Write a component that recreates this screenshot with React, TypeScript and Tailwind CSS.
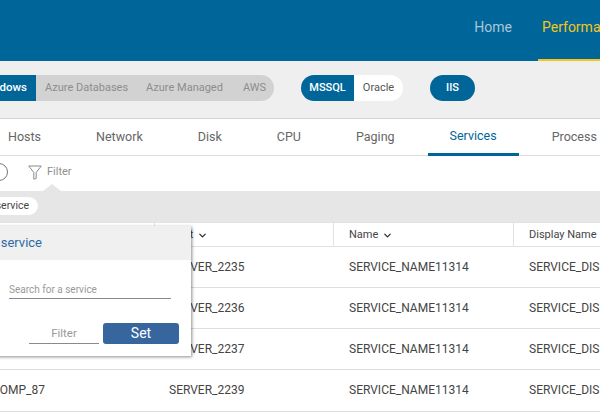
import React from 'react'
import { ChevronDown } from 'lucide-react'

const tabs = ['Hosts', 'Network', 'Disk', 'CPU', 'Paging', 'Services', 'Process']
const rows = ['SERVER_2235', 'SERVER_2236', 'SERVER_2237', 'SERVER_2239']

function Columns({ cells, className }: { cells: React.ReactNode[]; className: string }) {
  return (
    <div className={`-ml-[60px] grid w-[720px] grid-cols-[214px_179px_180px_1fr] ${className}`}>
      {cells.map((cell, i) => (
        <div key={i} className="flex items-center whitespace-nowrap">
          {cell}
        </div>
      ))}
    </div>
  )
}

function HeaderCell({ label, sort, first }: { label: string; sort?: boolean; first?: boolean }) {
  return (
    <div className={`flex h-full w-full items-center gap-[4px] pl-[15px] pt-[1px] ${first ? '' : 'border-l border-[#e2e2e2]'}`}>
      <span>{label}</span>
      {sort && <ChevronDown size={11} strokeWidth={2.5} className="text-[#222]" />}
    </div>
  )
}

export default function App() {
  return (
    <div className="relative h-[413px] w-[600px] overflow-hidden bg-white font-['Roboto',sans-serif]">
      {/* Top nav */}
      <div className="flex h-[61px] justify-end bg-[#006699] text-[14px]">
        <div className="flex items-center">
          <span className="mr-[26px] pb-[6px] text-[#a9c6d8]">Home</span>
          <div className="flex h-full w-[62px] items-center overflow-hidden border-b-2 border-[#f5c518] pb-[4px] pl-[4px]">
            <span className="whitespace-nowrap text-[#f5c518]">Performance</span>
          </div>
        </div>
      </div>

      {/* Platform switches */}
      <div className="flex h-[58px] items-center whitespace-nowrap border-b border-[#d2d2d2] bg-[#efefef] pb-[3px] text-[11px]">
        <div className="-ml-[40px] flex h-[26px] w-[314px] items-center overflow-hidden rounded-r-[13px] bg-[#d2d2d2] text-[#8d8d8d]">
          <div className="flex h-full w-[76px] shrink-0 items-center justify-end bg-[#006699] pr-[9px] text-[11.5px] font-medium text-white">
            Windows
          </div>
          <span className="ml-[9px]">Azure Databases</span>
          <span className="ml-[18px]">Azure Managed</span>
          <span className="ml-[20px]">AWS</span>
        </div>
        <div className="ml-[27px] flex h-[26px] w-[102px] overflow-hidden rounded-[13px] bg-white">
          <div className="flex w-[53px] items-center justify-center bg-[#006699] font-medium text-white">MSSQL</div>
          <div className="flex flex-1 items-center justify-center text-[#555]">Oracle</div>
        </div>
        <div className="ml-[27px] flex h-[26px] w-[45px] items-center justify-center rounded-[13px] bg-[#006699] font-medium text-white">
          IIS
        </div>
      </div>

      {/* Tabs */}
      <div className="flex h-[37px] items-stretch gap-[11px] whitespace-nowrap border-b border-[#dfdfdf] text-[12.5px] text-[#666]">
        {tabs.map((tab, i) => (
          <div
            key={tab}
            className={`flex items-center px-[22px] ${i === 0 ? '-ml-[14px]' : ''} ${
              tab === 'Services' ? '-mb-px border-b-[3px] border-[#006699] pt-[1px] text-[#006699]' : ''
            }`}
          >
            {tab}
          </div>
        ))}
      </div>

      {/* Filter row */}
      <div className="flex h-[35px] items-center pb-[3px] text-[11px] text-[#8f8f8f]">
        <div className="-ml-[10px] h-[18px] w-[18px] rounded-full border border-[#777]" />
        <svg width="14" height="15" viewBox="0 0 14 15" fill="none" className="ml-[20px]">
          <path d="M0.7 1h12.6L8.2 7.4v6L5.8 14.2V7.4z" stroke="#8a8a8a" strokeWidth="1" strokeLinejoin="round" />
        </svg>
        <span className="ml-[5px]">Filter</span>
      </div>

      {/* Applied filters band */}
      <div className="relative flex h-[31px] items-center bg-[#e6e6e6]">
        <div className="absolute -top-[7px] left-[43px] h-0 w-0 border-x-[9px] border-b-[7px] border-x-transparent border-b-[#e6e6e6]" />
        <div className="-ml-[40px] mb-[2px] flex h-[18px] w-[78px] items-center justify-end rounded-[9px] bg-white pr-[9px] text-[10.5px] text-[#444]">
          service
        </div>
      </div>

      {/* Table */}
      <Columns
        className="h-[25px] border-b border-t border-[#e2e2e2] text-[11px] text-[#444]"
        cells={[
          <HeaderCell label="Component" first />,
          <HeaderCell label="Host" sort />,
          <HeaderCell label="Name" sort />,
          <HeaderCell label="Display Name" />,
        ]}
      />
      {rows.map((server, i) => (
        <Columns
          key={server}
          className={`border-b border-[#dedede] text-[12px] text-[#444] ${i === 3 ? 'h-[42px] pb-[1px]' : 'h-[41px]'}`}
          cells={[
            <span className="pl-[52px]">COMP_87</span>,
            <span className="pl-[15px]">{server}</span>,
            <span className="pl-[16px]">SERVICE_NAME11314</span>,
            <span className="pl-[16px]">SERVICE_DISPLAY_NAME</span>,
          ]}
        />
      ))}

      {/* Service filter popup */}
      <div className="absolute left-[-20px] top-[226px] h-[130px] w-[211px] bg-white shadow-[1px_1px_3px_rgba(0,0,0,0.45)]">
        <div className="flex h-[34px] items-center justify-end bg-[#f0f0f0] pr-[149px] text-[13px] text-[#2f6aa6]">
          service
        </div>
        <div className="ml-[29px] mt-[22px] w-[162px] border-b border-[#8a8a8a] pb-[1px] text-[10px] text-[#999]">
          Search for a service
        </div>
        <div className="mt-[24px] flex items-end">
          <div className="ml-[49px] w-[70px] border-b border-[#8a8a8a] pb-[1px] text-center text-[11.5px] text-[#999]">
            Filter
          </div>
          <div className="ml-[4px] flex h-[21px] w-[76px] items-center justify-center rounded-[3px] bg-[#37669f] text-[14px] text-white">
            Set
          </div>
        </div>
      </div>
    </div>
  )
}
